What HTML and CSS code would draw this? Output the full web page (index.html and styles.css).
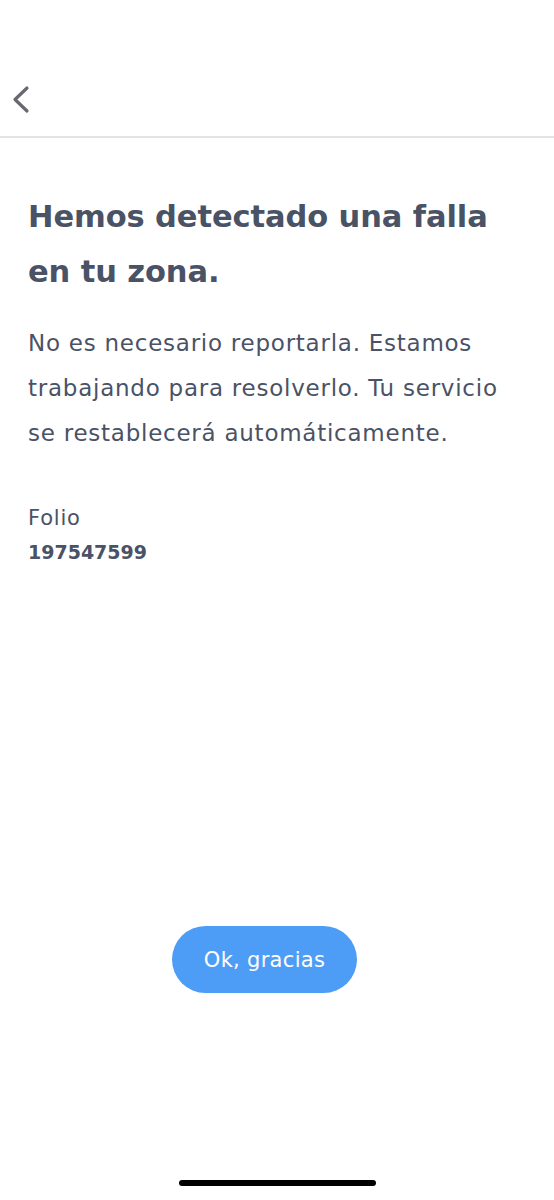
FILE: index.html
```html
<!DOCTYPE html>
<html lang="es">
<head>
<meta charset="utf-8">
<link rel="stylesheet" href="styles.css">
</head>
<body>
<div class="screen">
  <header class="topbar">
    <button class="back" aria-label="Atrás">
      <svg width="20" height="30" viewBox="0 0 20 30"><path d="M16 4 L4 15.5 L16 27" fill="none" stroke="#67696e" stroke-width="3.2" stroke-linecap="round" stroke-linejoin="round"/></svg>
    </button>
  </header>
  <main class="content">
    <h1 class="title">Hemos detectado una falla en tu zona.</h1>
    <p class="desc">No es necesario reportarla. Estamos trabajando para resolverlo. Tu servicio se restablecerá automáticamente.</p>
    <div class="folio">
      <div class="folio-label">Folio</div>
      <div class="folio-num">197547599</div>
    </div>
  </main>
  <div class="actions">
    <button class="ok">Ok, gracias</button>
  </div>
  <div class="home-wrap"><div class="home"></div></div>
</div>
</body>
</html>
```
FILE: styles.css
```css
* { box-sizing: border-box; }
html, body { margin: 0; padding: 0; background: #fff; }
body { font-family: "DejaVu Sans", sans-serif; color: #4a5266; }
.screen { width: 554px; height: 1200px; display: flex; flex-direction: column; }
.topbar { height: 138px; border-bottom: 2px solid #e3e3e5; display: flex; align-items: flex-end; padding: 0 0 21px 9px; }
.back { background: none; border: 0; padding: 0; width: 24px; height: 32px; display: flex; align-items: center; justify-content: center; }
.content { padding: 51px 28px 0 28px; flex: 1; }
.title { margin: 0; font-size: 30.5px; font-weight: 700; line-height: 55px; color: #4a5266; width: 500px; letter-spacing: -0.1px; }
.desc { margin: 22px 0 0; font-size: 23px; line-height: 45px; width: 498px; letter-spacing: 0.75px; }
.folio { margin-top: 46px; }
.folio-label { font-size: 21px; line-height: 32px; letter-spacing: 0.8px; }
.folio-num { font-size: 19px; font-weight: 700; line-height: 36px; }
.actions { display: flex; justify-content: center; padding-bottom: 207px; }
.ok { margin-right: 25px; width: 185px; height: 67px; border: 0; border-radius: 34px; background: #4d9df6; color: #fff; font-family: "DejaVu Sans", sans-serif; font-size: 21px; letter-spacing: 0.3px; }
.home-wrap { height: 0; position: relative; }
.home { position: absolute; left: 179px; top: -20px; width: 197px; height: 6px; border-radius: 3px; background: #000; }
```
